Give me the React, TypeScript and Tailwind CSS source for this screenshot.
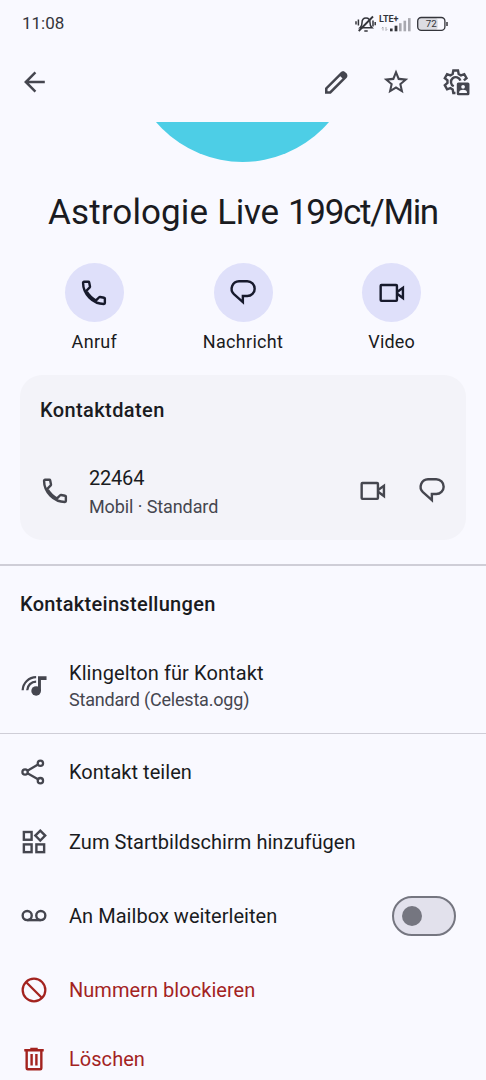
import React from 'react';

interface IconProps {
  className?: string;
}

const Icon: React.FC<IconProps & { children: React.ReactNode }> = ({ className = 'size-8', children }) => (
  <svg viewBox="0 0 24 24" fill="currentColor" className={`shrink-0 ${className}`}>
    {children}
  </svg>
);

const PhoneIcon = ({ className }: IconProps) => (
  <Icon className={className}>
    <path
      d="M4.500 3.600h3.300c.3 0 .5.200.6.500l.6 3.100c.05.250-.05.450-.2.600L6.200 10.400c1.700 2.900 4.200 5.500 7.300 7.200l2.400-2.400c.2-.2.400-.25.650-.2l3.050.6c.3.050.55.300.55.600v3.300c0 .4-.3.700-.7.700C11.200 20.200 3.800 12.800 3.800 4.300c0-.4.3-.7.7-.7z"
      fill="none"
      stroke="currentColor"
      strokeWidth="1.800"
    />
  </Icon>
);

const MessageIcon = ({ className }: IconProps) => (
  <Icon className={className}>
    <path
      d="M9 3.200h6.200a5.500 5.500 0 0 1 0 11.100h-3.300v4.500L5.200 12.900A5.650 5.650 0 0 1 9 3.200z"
      fill="none"
      stroke="currentColor"
      strokeWidth="1.800"
    />
  </Icon>
);

const VideoIcon = ({ className }: IconProps) => (
  <Icon className={className}>
    <g fill="none" stroke="currentColor" strokeWidth="1.800">
      <rect x="3.500" y="6" width="12.200" height="11.900" rx="0.600" />
      <path d="M15.800 11.300l4.400-3.200v7.700l-4.400-3.200" />
    </g>
  </Icon>
);

const BackIcon = () => (
  <Icon>
    <path d="M8.200 12.900l5.500 5.600-1.300 1.300L4.500 12l7.900-7.800 1.300 1.300-5.500 5.600h11.900v1.800z" />
  </Icon>
);

const EditIcon = () => (
  <Icon>
    <path
      d="M4.700 19.800v-3L16.200 5.300a1.400 1.400 0 0 1 2 0l1 1a1.400 1.400 0 0 1 0 2L7.700 19.800z"
      fill="none"
      stroke="currentColor"
      strokeWidth="1.900"
    />
    <path d="M14.300 6.800l2-2a1.800 1.800 0 0 1 2.500 0l.9.9a1.800 1.800 0 0 1 0 2.500l-2 2z" />
  </Icon>
);

const StarIcon = () => (
  <Icon>
    <path d="M21.200 9.500l-6.700-.600L12 2.700 9.500 8.900l-6.700.6 5.100 4.400L6.400 20.500 12 17l5.600 3.500-1.500-6.600zM12 15.200l-3.300 2 .9-3.800-3-2.600 3.950-.35L12 6.800l1.450 3.650 3.950.35-3 2.600.9 3.800z" />
  </Icon>
);

const ManageIcon = () => (
  <Icon>
    <path
      d="M11.600 20.200H10l-.5-2.600-1.700-1-2.500.9-1.700-3.100 2-1.700v-1.900l-2-1.700L5.300 6.100l2.500.9 1.700-1 .5-2.600h3.500l.5 2.600 1.700 1 2.500-.9 1.700 3-2 1.700"
      fill="none"
      stroke="currentColor"
      strokeWidth="1.800"
    />
    <path d="M15.300 11a3.600 3.600 0 1 0-5 4.200" fill="none" stroke="currentColor" strokeWidth="1.800" />
    <rect x="12.600" y="12.300" width="9.500" height="9.700" rx="1.200" />
    <circle cx="17.300" cy="15.600" r="1.400" fill="#f9f9ff" />
    <path d="M14.400 20.200v-.6c0-1.200 1.700-1.700 2.900-1.700s2.900.5 2.900 1.700v.6z" fill="#f9f9ff" />
  </Icon>
);

const RingtoneIcon = () => (
  <Icon>
    <circle cx="13.600" cy="15.700" r="3.600" />
    <path d="M15 4.600h6.400v2.900h-4.200v8.200H15z" />
    <g fill="none" stroke="currentColor" strokeWidth="1.700">
      <path d="M3.500 15.200A10.200 10.200 0 0 1 13.600 5.400" />
      <path d="M6.900 15.200a6.800 6.800 0 0 1 6.700-6.500" />
    </g>
  </Icon>
);

const ShareIcon = () => (
  <Icon>
    <g fill="none" stroke="currentColor" strokeWidth="1.700">
      <circle cx="5.300" cy="12" r="2" />
      <circle cx="16.800" cy="5.400" r="2" />
      <circle cx="16.800" cy="18.500" r="2" />
      <path d="M7.100 11l7.900-4.600M7.100 13l7.900 4.500" />
    </g>
  </Icon>
);

const WidgetsIcon = () => (
  <Icon>
    <g fill="none" stroke="currentColor" strokeWidth="1.800">
      <rect x="4.400" y="4.500" width="5.800" height="5.800" />
      <rect x="4.400" y="13.800" width="5.800" height="5.800" />
      <rect x="13.800" y="13.800" width="5.800" height="5.800" />
      <path d="M16.700 3.500l3.700 3.700-3.700 3.700-3.700-3.700z" />
    </g>
  </Icon>
);

const VoicemailIcon = () => (
  <Icon>
    <g fill="none" stroke="currentColor" strokeWidth="1.800">
      <circle cx="6.900" cy="11.700" r="3.400" />
      <circle cx="17.100" cy="11.700" r="3.400" />
      <path d="M6.900 15.100h10.200" />
    </g>
  </Icon>
);

const BlockIcon = () => (
  <Icon>
    <g fill="none" stroke="currentColor" strokeWidth="1.700">
      <circle cx="12" cy="12" r="8.500" />
      <path d="M6 6l12 12" />
    </g>
  </Icon>
);

const TrashIcon = () => (
  <Icon>
    <path d="M9.200 3.600h5.600v.9h4.500v1.900H4.700V4.500h4.500z" />
    <path d="M6.500 5.500v13.400c0 .5.400.8.800.8h9.400c.4 0 .8-.3.800-.8V5.500M10.200 8.200v8.600M13.800 8.200v8.600" fill="none" stroke="currentColor" strokeWidth="1.800" />
  </Icon>
);

const StatusIcons = () => (
  <svg viewBox="0 0 96 22" className="h-[22px] w-24">
    <g fill="none" stroke="#34353b" strokeWidth="1.500">
      <path d="M5.200 14.700c1.600-1.300 1.800-2.800 1.800-5 0-3 1.500-4.800 4-4.800s4 1.800 4 4.800c0 2.200.3 3.700 1.900 5z" />
      <path d="M3.700 18L18 3.500" strokeWidth="1.800" />
      <path d="M9.300 17.900h3.400M3.400 6.500v6M1 8.300v3.200M18 7.500v6M20.200 9v3.200" />
    </g>
    <text x="24" y="9.400" fontSize="8.800" fontWeight="700" fill="#34353b" textLength="19.500" lengthAdjust="spacingAndGlyphs">
      LTE+
    </text>
    <path d="M28 17.500V14m-1.300 1.300l1.300-1.300M31 14v3.500m1.300-1.300L31 17.500" fill="none" stroke="#a6a6ad" strokeWidth="0.900" />
    <g fill="#34353b">
      <rect x="35" y="15.500" width="2.600" height="2.800" />
      <rect x="39.600" y="12.700" width="2.800" height="5.600" />
    </g>
    <g fill="#a9a9b0">
      <rect x="44" y="10.200" width="2.600" height="8.100" />
      <rect x="48.500" y="7.700" width="2.600" height="10.600" />
      <rect x="53" y="5.100" width="2.600" height="13.200" />
    </g>
    <rect x="62.700" y="4.600" width="20" height="12.700" rx="3.500" fill="#dcdce2" />
    <rect x="62.700" y="4.500" width="27.200" height="12.800" rx="3.600" fill="none" stroke="#34353b" strokeWidth="1.300" />
    <path d="M92 8.900v4" stroke="#34353b" strokeWidth="1.500" />
    <text x="76.300" y="14.400" fontSize="9.800" fill="#34353b" textAnchor="middle">
      72
    </text>
  </svg>
);

interface ActionProps {
  label: string;
  labelClass?: string;
  children: React.ReactNode;
}

const Action: React.FC<ActionProps> = ({ label, labelClass = '', children }) => (
  <button className="flex flex-1 flex-col items-center">
    <span className="flex size-[59px] items-center justify-center rounded-full bg-[#dfe0fa] text-[#171a2c]">{children}</span>
    <span className={`mt-2.5 text-[18px] leading-5 whitespace-nowrap text-[#1a1b21] ${labelClass}`}>{label}</span>
  </button>
);

interface RowProps {
  icon: React.ReactNode;
  label: string;
  className: string;
  labelClass?: string;
  children?: React.ReactNode;
}

const Row: React.FC<RowProps> = ({ icon, label, className, labelClass = '', children }) => (
  <div className={`flex shrink-0 items-center pr-[30px] pl-[18px] ${className}`}>
    {icon}
    <span className={`ml-[19px] flex-1 text-[20px] tracking-[0.04px] whitespace-nowrap ${labelClass}`}>{label}</span>
    {children}
  </div>
);

const App: React.FC = () => {
  return (
    <div className="flex h-[1080px] w-[486px] flex-col overflow-hidden bg-[#f9f9ff] font-[Roboto,sans-serif] text-[#1a1b21]">
      <div className="flex h-[46px] shrink-0 items-center justify-between pt-px pr-[35px] pl-[22px]">
        <span className="text-[17px] text-[#34353b]">11:08</span>
        <StatusIcons />
      </div>

      <header className="mb-[3.5px] flex h-[72px] shrink-0 items-center pr-[14px] pl-[18px] text-[#45464f]">
        <button className="mr-auto">
          <BackIcon />
        </button>
        <div className="flex items-center gap-7">
          <EditIcon />
          <StarIcon />
          <ManageIcon />
        </div>
      </header>

      <div className="flex h-[40.5px] shrink-0 items-end justify-center overflow-hidden pr-px">
        <div className="size-[227px] shrink-0 rounded-full bg-[#4dcee6]" />
      </div>

      <h1 className="flex h-[101px] shrink-0 items-center justify-center gap-[9px] pt-0.5 text-[35px] whitespace-nowrap">
        <span className="tracking-[0.100px]">Astrologie</span>
        <span className="tracking-[-0.200px]">Live</span>
        <span className="tracking-[-1.300px]">199ct/Min</span>
      </h1>

      <div className="flex shrink-0 px-5">
        <Action label="Anruf" labelClass="tracking-[0.3px]">
          <PhoneIcon />
        </Action>
        <Action label="Nachricht" labelClass="tracking-[0.3px]">
          <MessageIcon />
        </Action>
        <Action label="Video" labelClass="tracking-[0.2px]">
          <VideoIcon />
        </Action>
      </div>

      <section className="mx-5 mt-[23px] h-[165px] shrink-0 rounded-[22px] bg-[#f3f3f9]">
        <h2 className="flex h-[70px] items-center pl-5 text-[20px] font-medium tracking-[0.4px]">Kontaktdaten</h2>
        <div className="flex h-[92px] items-center pr-[18px] pl-[18.5px] text-[#45464f]">
          <PhoneIcon />
          <div className="ml-[18.5px] flex-1 pt-0.5">
            <p className="text-[20px] leading-[29px] tracking-[-0.2px] text-[#1a1b21]">22464</p>
            <p className="text-[18px] leading-7 tracking-[-0.1px]">Mobil · Standard</p>
          </div>
          <VideoIcon />
          <MessageIcon className="ml-[27.5px] size-8" />
        </div>
      </section>

      <section className="mt-6 shrink-0 border-t-2 border-b border-[#cfced7]">
        <h2 className="flex h-[76px] items-center pl-5 text-[20px] font-medium tracking-[0.3px]">Kontakteinstellungen</h2>
        <div className="flex h-[91px] items-center pb-[3px] pl-[18px]">
          <span className="text-[#45464f]">
            <RingtoneIcon />
          </span>
          <div className="ml-[19px]">
            <p className="text-[20px] leading-7 tracking-[0.1px]">Klingelton für Kontakt</p>
            <p className="text-[18px] leading-[26px] tracking-[-0.2px] text-[#45464f]">Standard (Celesta.ogg)</p>
          </div>
        </div>
      </section>

      <Row className="h-[76px] text-[#45464f]" labelClass="text-[#1a1b21]" icon={<ShareIcon />} label="Kontakt teilen" />
      <Row className="h-[63px] text-[#45464f]" labelClass="text-[#1a1b21]" icon={<WidgetsIcon />} label="Zum Startbildschirm hinzufügen" />
      <Row className="h-[86px] text-[#45464f]" labelClass="text-[#1a1b21]" icon={<VoicemailIcon />} label="An Mailbox weiterleiten">
        <button role="switch" aria-checked="false" className="flex h-10 w-16 items-center rounded-full border-[2.5px] border-[#757680] bg-[#e2e1ec] pl-[7.5px]">
          <span className="size-5 rounded-full bg-[#757680]" />
        </button>
      </Row>
      <Row className="h-[62px] text-[#a3231f]" icon={<BlockIcon />} label="Nummern blockieren" />
      <Row className="h-[76px] text-[#a3231f]" icon={<TrashIcon />} label="Löschen" />
    </div>
  );
};

export default App;
